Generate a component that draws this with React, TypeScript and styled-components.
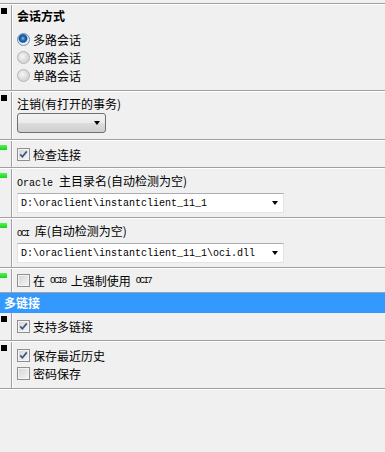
import React from 'react';
import styled, {createGlobalStyle} from 'styled-components';

const GlobalStyle = createGlobalStyle`
  html, body {
    margin: 0;
    padding: 0;
    background: #f0f0f0;
  }
  body {
    font-family: "Noto Sans CJK SC", "Liberation Sans", sans-serif;
    font-size: 12px;
    color: #000;
  }
`;

const Page = styled.div`
  width: 385px;
  height: 452px;
  padding-top: 3px;
  box-sizing: border-box;
  background: #f0f0f0;
  overflow: hidden;
`;

const Rule = styled.div`
  height: 1px;
  background: #a0a0a0;
  border-bottom: 1px solid #fff;
`;

const Section = styled.div<{ $h: number }>`
  display: flex;
  height: ${p => p.$h}px;
`;

const Gutter = styled.div`
  width: 11px;
  flex: none;
`;

const Marker = styled.div<{ $green?: boolean }>`
  margin: ${p => p.$green ? '4px 0 0 0' : '3px 0 0 1px'};
  width: ${p => p.$green ? '7px' : '6px'};
  height: ${p => p.$green ? '5px' : '6px'};
  background: ${p => p.$green ? 'linear-gradient(#5cf05c, #12d612)' : '#000'};
`;

const Body = styled.div<{ $top?: number; $center?: boolean }>`
  flex: 1;
  display: flex;
  flex-direction: column;
  justify-content: ${p => p.$center ? 'center' : 'flex-start'};
  border-left: 1px solid #a0a0a0;
  box-shadow: inset 1px 0 #fff;
  padding: ${p => p.$top ?? 0}px 0 0 5px;
`;

const Title = styled.div`
  font-weight: 700;
  line-height: 16px;
  margin-bottom: 6px;
`;

const Label = styled.div`
  line-height: 16px;
  margin-bottom: 1px;
  white-space: nowrap;
`;

const Mono = styled.span`
  font-family: "Liberation Mono", monospace;
  font-size: 10px;
`;

// the small OCI caps in the original use a tiny raster face
const Tiny = styled.span<{ $l?: number; $r?: number }>`
  font-family: "Liberation Mono", monospace;
  font-size: 9px;
  letter-spacing: -1.5px;
  margin: 0 ${p => p.$r ?? 5}px 0 ${p => p.$l ?? 5}px;
`;

const Row = styled.label`
  display: flex;
  align-items: center;
  height: 18px;
  white-space: nowrap;
`;

const Radio = styled.span<{ $on?: boolean }>`
  width: 13px;
  height: 13px;
  box-sizing: border-box;
  border-radius: 50%;
  border: 1px solid ${p => p.$on ? '#6f8fb0' : '#b4b4b4'};
  margin-right: 3px;
  flex: none;
  background: ${p => p.$on
    ? 'radial-gradient(circle at 45% 40%, #8ccaf2 0, #2f7ec6 1.6px, #0e4d8f 3.6px, #6a8fb6 4.3px, #e8eef4 5px)'
    : 'radial-gradient(circle at 40% 40%, #f6f6f6 0, #e6e6e6 3px, #d8d8d8 5.5px)'};
`;

const Box = styled.span`
  width: 13px;
  height: 13px;
  box-sizing: border-box;
  border: 1px solid #8e8f8f;
  margin-right: 3px;
  flex: none;
  display: flex;
  background: linear-gradient(135deg, #d2d4d6, #f6f6f6);
  box-shadow: inset 0 0 0 1px #f4f4f4;
`;

const Check = ({on}: { on?: boolean }) => (
  <Box>
    {on && (
      <svg width="11" height="11" viewBox="0 0 11 11">
        <path d="M2.2 5.4 L4.4 7.8 L8.8 2.4" fill="none" stroke="#3f5380" strokeWidth="1.7"/>
      </svg>
    )}
  </Box>
);

const Arrow = styled.span`
  width: 0;
  height: 0;
  border-left: 3.5px solid transparent;
  border-right: 3.5px solid transparent;
  border-top: 4px solid #000;
  flex: none;
`;

const Dropdown = styled.div`
  width: 89px;
  height: 20px;
  box-sizing: border-box;
  border: 1px solid #707070;
  border-radius: 3px;
  background: linear-gradient(#f2f2f2 0%, #ebebeb 50%, #dddddd 51%, #cfcfcf 100%);
  display: flex;
  align-items: center;
  justify-content: flex-end;
  padding-right: 5px;
`;

const Combo = styled.div`
  width: 267px;
  height: 20px;
  box-sizing: border-box;
  background: #fff;
  border: 1px solid #e2e3ea;
  border-top-color: #abadb3;
  display: flex;
  align-items: center;
  padding: 0 5px 0 3px;
`;

const ComboText = styled.span`
  flex: 1;
  font-family: "Liberation Mono", monospace;
  font-size: 10px;
  white-space: nowrap;
`;

const Bar = styled.div`
  height: 20px;
  border-top: 1px solid #a0a0a0;
  background: #3399ff;
  color: #fff;
  font-weight: 700;
  line-height: 20px;
  padding-left: 4px;
`;

export default function App() {
  return (
    <Page>
      <GlobalStyle/>
      <Rule/>
      <Section $h={85}>
        <Gutter><Marker/></Gutter>
        <Body $top={3}>
          <Title>会话方式</Title>
          <Row><Radio $on/>多路会话</Row>
          <Row><Radio/>双路会话</Row>
          <Row><Radio/>单路会话</Row>
        </Body>
      </Section>
      <Rule/>
      <Section $h={47}>
        <Gutter><Marker/></Gutter>
        <Body $top={4}>
          <Label>注销(有打开的事务)</Label>
          <Dropdown><Arrow/></Dropdown>
        </Body>
      </Section>
      <Rule/>
      <Section $h={26}>
        <Gutter><Marker $green/></Gutter>
        <Body $center>
          <Row><Check on/>检查连接</Row>
        </Body>
      </Section>
      <Rule/>
      <Section $h={48}>
        <Gutter><Marker $green/></Gutter>
        <Body $top={4}>
          <Label><Mono>Oracle </Mono>主目录名(自动检测为空)</Label>
          <Combo>
            <ComboText>D:\oraclient\instantclient_11_1</ComboText>
            <Arrow/>
          </Combo>
        </Body>
      </Section>
      <Rule/>
      <Section $h={48}>
        <Gutter><Marker $green/></Gutter>
        <Body $top={4}>
          <Label><Tiny $l={0} $r={6}>OCI</Tiny>库(自动检测为空)</Label>
          <Combo>
            <ComboText>D:\oraclient\instantclient_11_1\oci.dll</ComboText>
            <Arrow/>
          </Combo>
        </Body>
      </Section>
      <Rule/>
      <Section $h={23}>
        <Gutter><Marker $green/></Gutter>
        <Body $center>
          <Row><Check/>在<Tiny>OCI8</Tiny>上强制使用<Tiny>OCI7</Tiny></Row>
        </Body>
      </Section>
      <Bar>多链接</Bar>
      <Section $h={27}>
        <Gutter><Marker/></Gutter>
        <Body $center>
          <Row><Check on/>支持多链接</Row>
        </Body>
      </Section>
      <Rule/>
      <Section $h={46}>
        <Gutter><Marker/></Gutter>
        <Body $top={4}>
          <Row><Check on/>保存最近历史</Row>
          <Row><Check/>密码保存</Row>
        </Body>
      </Section>
      <Rule/>
    </Page>
  );
}
